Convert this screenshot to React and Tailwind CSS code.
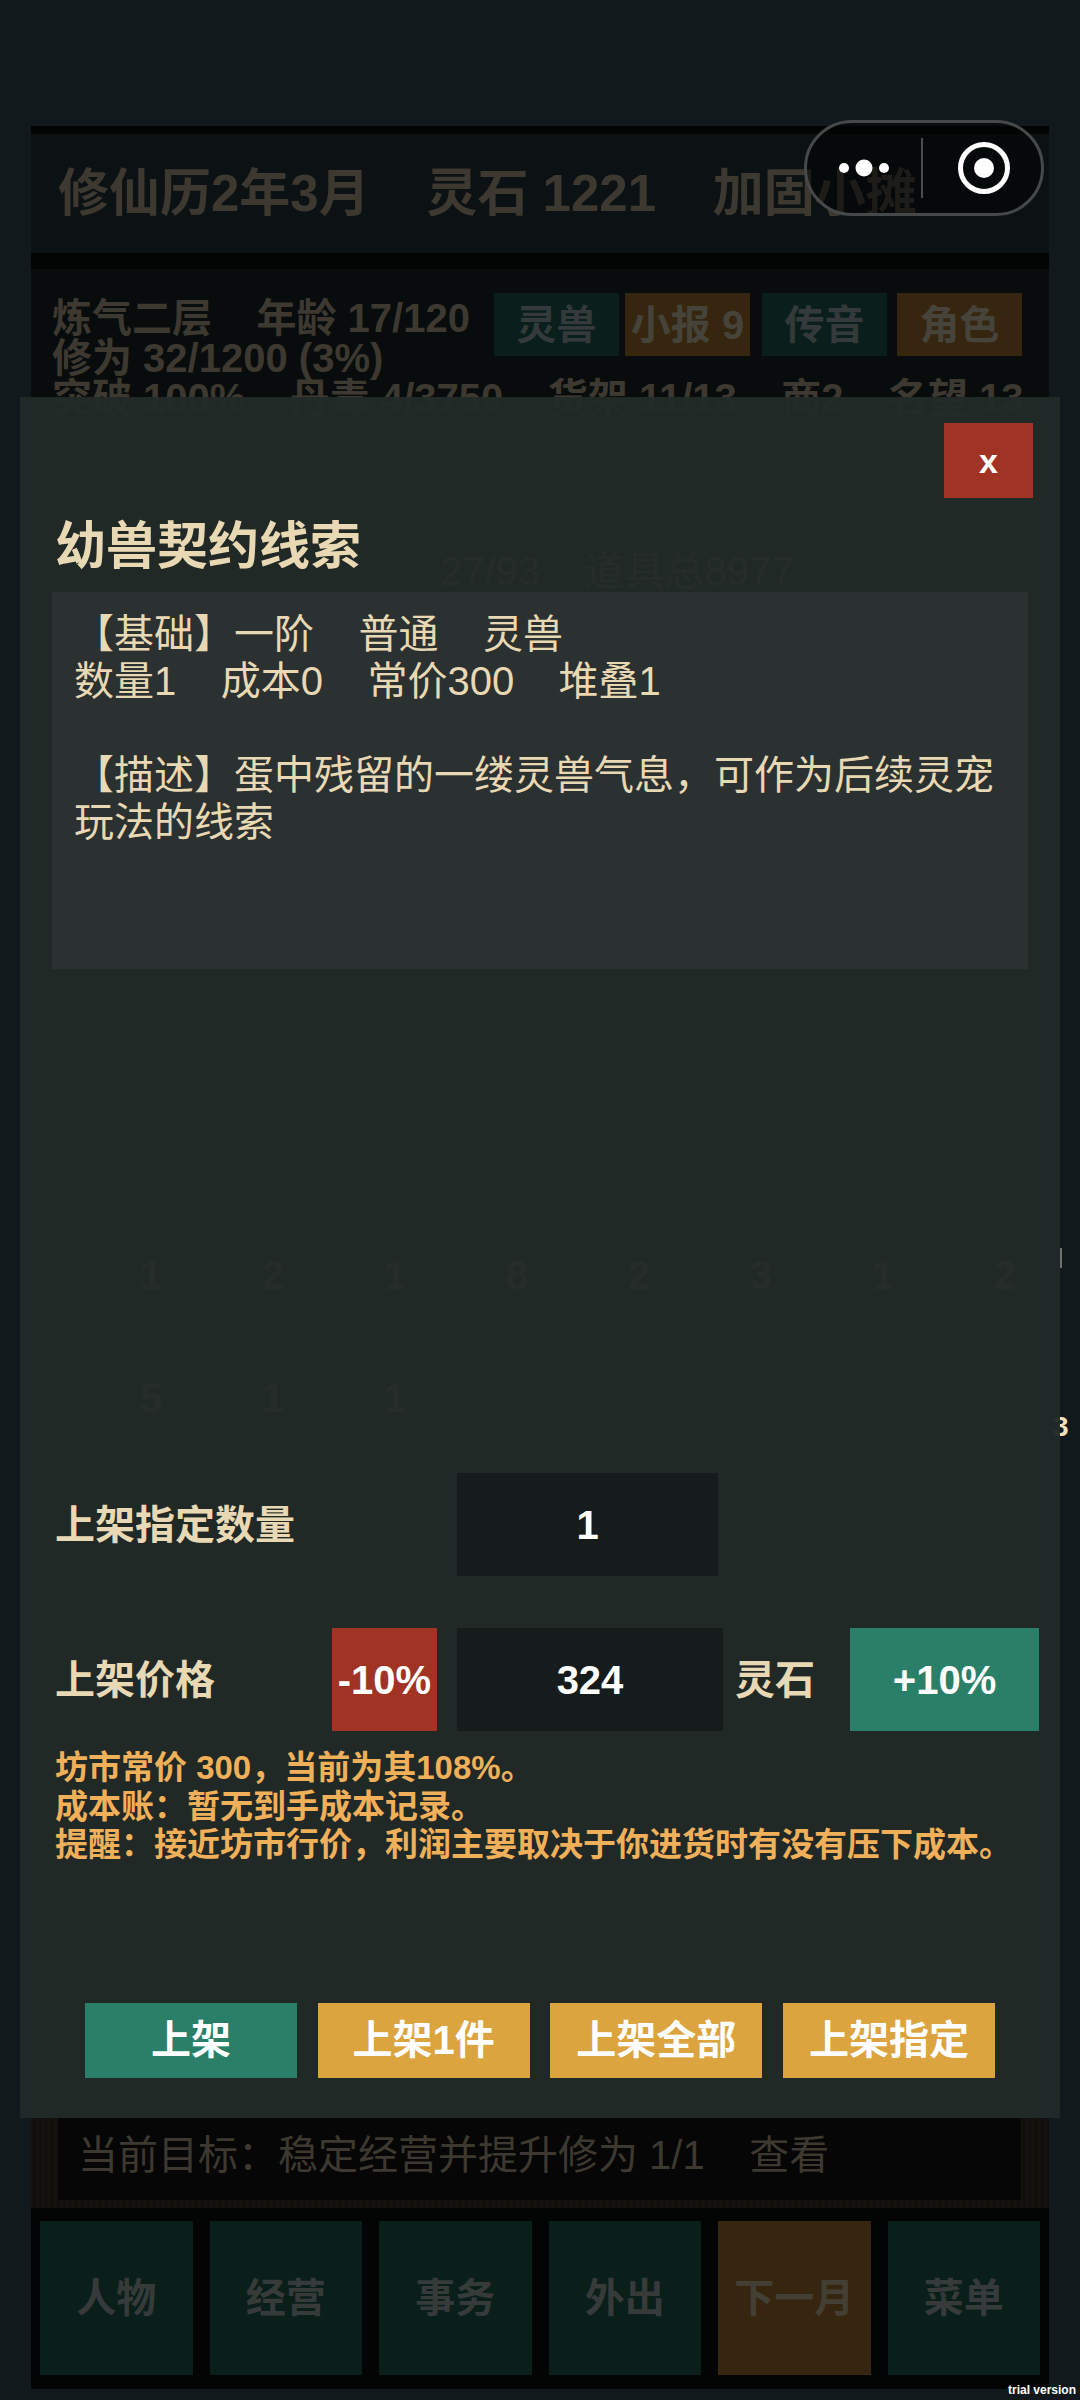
const FONT = "font-['Liberation_Sans','Noto_Sans_CJK_SC',sans-serif]";

const topButtons = [
  { label: "灵兽", tone: "green", ml: "" },
  { label: "小报 9", tone: "amber", ml: "ml-[6px]" },
  { label: "传音", tone: "green", ml: "ml-[12px]" },
  { label: "角色", tone: "amber", ml: "ml-[10px]" },
];

const navItems = [
  { label: "人物", tone: "green" },
  { label: "经营", tone: "green" },
  { label: "事务", tone: "green" },
  { label: "外出", tone: "green" },
  { label: "下一月", tone: "amber" },
  { label: "菜单", tone: "green" },
];

const actions = [
  { label: "上架", bg: "bg-[#2a7f69]" },
  { label: "上架1件", bg: "bg-[#dba43e]" },
  { label: "上架全部", bg: "bg-[#dba43e]" },
  { label: "上架指定", bg: "bg-[#dba43e]" },
];

const slotRows = [
  [1, 2, 1, 8, 2, 3, 1, 2],
  [5, 1, 1],
];

function Capsule() {
  return (
    <div className="absolute left-[804px] top-[120px] flex h-[96px] w-[240px] items-center rounded-full border-[3px] border-[#45494a] bg-black/50">
      <svg width="240" height="96" viewBox="0 0 240 96" className="-m-[3px] shrink-0">
        <circle cx="40" cy="48" r="5" fill="#fff" />
        <circle cx="60" cy="48" r="8.5" fill="#fff" />
        <circle cx="80" cy="48" r="5" fill="#fff" />
        <rect x="117" y="18" width="2" height="60" fill="#4a4e4f" />
        <circle cx="180" cy="48" r="23.5" fill="none" stroke="#fff" strokeWidth="5" />
        <circle cx="180" cy="48" r="10" fill="#fff" />
      </svg>
    </div>
  );
}

function GameScreen() {
  return (
    <div className="flex h-[2263px] w-[1018px] flex-col bg-[#030505]">
      <div className="mt-[8px] flex h-[119px] items-center bg-[#0c1214] pl-[27px] text-[51px] font-bold leading-none whitespace-pre text-[#3d3930]">
        {"修仙历2年3月    灵石 1221    加固小摊"}
      </div>

      <div className="mt-[16px] flex h-[1849px] flex-col bg-[#080c0d] pl-[21px] pr-[27px]">
        <div className="mt-[24px] flex items-start">
          <div className="w-[442px] pt-[5px] text-[40px] leading-[40px] font-bold whitespace-pre text-[#3d3930]">
            <div>{"炼气二层    年龄 17/120"}</div>
            <div>修为 32/1200 (3%)</div>
          </div>
          <div className="flex">
            {topButtons.map((b) => (
              <div
                key={b.label}
                className={`flex h-[63px] w-[125px] items-center justify-center text-[40px] font-bold ${b.ml} ${
                  b.tone === "green" ? "bg-[#0a1f1c] text-[#343a39]" : "bg-[#37260f] text-[#45433a]"
                }`}
              >
                {b.label}
              </div>
            ))}
          </div>
        </div>
        <div className="text-[40px] leading-[40px] font-bold whitespace-pre text-[#3d3930]">
          {"突破 100%    丹毒 4/3750    货架 11/13    商2    名望 13"}
        </div>

        <div className="mt-[133px] pl-[388px] text-[40px] leading-[40px] whitespace-pre text-[#7a7060]">
          {"27/93    道具总8977"}
        </div>

        <div className="mt-[659px] -ml-[10px] flex flex-col gap-[73px] text-[#7a7060]">
          {slotRows.map((row, i) => (
            <div key={i} className="flex">
              {row.map((n, j) => (
                <div key={j} className="w-[122px] pr-[2px] text-right text-[40px] font-bold leading-[50px]">
                  {n}
                </div>
              ))}
            </div>
          ))}
        </div>
      </div>

      <div className="flex h-[90px] bg-[repeating-linear-gradient(90deg,#171410_0px,#0f0d0a_3px,#15120e_6px)] pl-[27px] pr-[28px] pb-[8px]">
        <div className="flex flex-1 items-start bg-[#050605] pl-[20px] pt-[14px] text-[40px] leading-[46px] whitespace-pre text-[#3d3930]">
          {"当前目标：稳定经营并提升修为 1/1    查看"}
        </div>
      </div>

      <div className="grid grid-cols-6 gap-x-[17px] px-[9px] pt-[13px]">
        {navItems.map((n) => (
          <div
            key={n.label}
            className={`flex h-[154px] items-center justify-center text-[40px] font-bold ${
              n.tone === "green" ? "bg-[#0a1e1a] text-[#363b3a]" : "bg-[#37260f] text-[#443f35]"
            }`}
          >
            {n.label}
          </div>
        ))}
      </div>
    </div>
  );
}

function ListingModal() {
  return (
    <div className="absolute left-[20px] top-[397px] flex h-[1721px] w-[1040px] flex-col bg-[#222a28]/[0.97] pl-[32px] pr-[21px]">
      <div className="flex justify-end pt-[26px] pr-[6px]">
        <button className="flex h-[75px] w-[89px] items-center justify-center bg-[#a03324] text-[34px] font-bold leading-none text-white">
          x
        </button>
      </div>

      <h2 className="mt-[23px] pl-[3px] text-[51px] font-bold leading-[52px] text-[#e8d8b4]">幼兽契约线索</h2>

      <div className="mt-[19px] h-[377px] w-[976px] bg-[#2b3131] px-[22px] pt-[19px] text-[40px] leading-[47px] whitespace-pre-wrap text-[#e8d8b4]">
        <div>{"【基础】一阶    普通    灵兽"}</div>
        <div>{"数量1    成本0    常价300    堆叠1"}</div>
        <div className="mt-[47px]">【描述】蛋中残留的一缕灵兽气息，可作为后续灵宠</div>
        <div>玩法的线索</div>
      </div>

      <div className="mt-[504px] flex h-[103px] items-center pl-[3px]">
        <span className="w-[402px] text-[40px] font-bold text-[#e8d8b4]">上架指定数量</span>
        <div className="flex h-full w-[261px] items-center justify-center bg-[#161c1c] text-[40px] font-bold text-white">1</div>
      </div>

      <div className="mt-[52px] flex h-[103px] items-center pl-[3px]">
        <span className="w-[277px] text-[40px] font-bold text-[#e8d8b4]">上架价格</span>
        <button className="flex h-full w-[105px] items-center justify-center bg-[#a03324] text-[40px] font-bold text-white">-10%</button>
        <div className="ml-[20px] flex h-full w-[266px] items-center justify-center bg-[#161c1c] text-[40px] font-bold text-white">324</div>
        <span className="ml-[12px] w-[115px] text-[40px] font-bold text-[#e8d8b4]">灵石</span>
        <button className="flex h-full w-[189px] items-center justify-center bg-[#2a7f69] text-[40px] font-bold text-white">+10%</button>
      </div>

      <div className="mt-[18px] pl-[3px] text-[33px] font-bold leading-[38.5px] text-[#f0b05a]">
        <div>坊市常价 300，当前为其108%。</div>
        <div>成本账：暂无到手成本记录。</div>
        <div>提醒：接近坊市行价，利润主要取决于你进货时有没有压下成本。</div>
      </div>

      <div className="mt-[138px] flex gap-[20.67px] pl-[33px]">
        {actions.map((a) => (
          <button
            key={a.label}
            className={`flex h-[75px] w-[212px] items-center justify-center text-[40px] font-bold text-white ${a.bg}`}
          >
            {a.label}
          </button>
        ))}
      </div>
    </div>
  );
}

export default function App() {
  return (
    <div className={`relative h-[2400px] w-[1080px] overflow-hidden bg-[#12191d] pl-[31px] pt-[126px] ${FONT}`}>
      <GameScreen />
      <Capsule />
      {/* bits of page text sticking out past the modal's right edge */}
      <span className="absolute left-[1053px] top-[1412px] text-[28px] font-bold leading-[30px] text-[#efe0bd]">3</span>
      <span className="absolute left-[1060px] top-[1248px] h-[20px] w-[2px] bg-[#6e716c]" />
      <ListingModal />
      <span className="absolute right-[4px] top-[2382px] text-[12px] font-bold leading-[16px] text-white">trial version</span>
    </div>
  );
}
